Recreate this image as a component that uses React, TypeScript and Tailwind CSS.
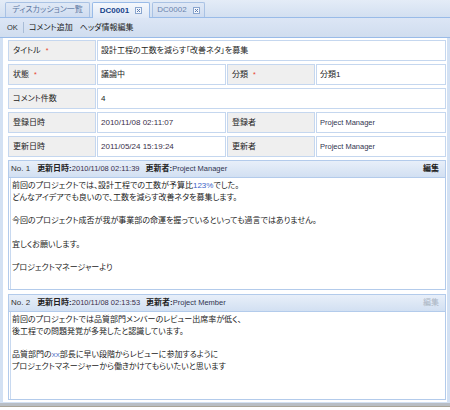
import { ReactNode } from "react";

interface Comment {
  no: number;
  updatedAt: string;
  updatedBy: string;
  body: ReactNode;
  editable: boolean;
  bodyHeight: string;
}

const comments: Comment[] = [
  {
    no: 1,
    updatedAt: "2010/11/08 02:11:39",
    updatedBy: "Project Manager",
    editable: true,
    bodyHeight: "h-[111px]",
    body: (
      <>
        前回のプロジェクトでは、設計工程での工数が予算比
        <span className="text-[#3b5fc8]">123%</span>でした。
        {"\n"}どんなアイデアでも良いので、工数を減らす改善ネタを募集します。
        {"\n\n"}今回のプロジェクト成否が我が事業部の命運を握っているといっても過言ではありません。
        {"\n\n"}宜しくお願いします。
        {"\n\n"}プロジェクトマネージャーより
      </>
    ),
  },
  {
    no: 2,
    updatedAt: "2010/11/08 02:13:53",
    updatedBy: "Project Member",
    editable: false,
    bodyHeight: "h-[87px]",
    body: (
      <>
        前回のプロジェクトでは品質部門メンバーのレビュー出席率が低く、
        {"\n"}後工程での問題発覚が多発したと認識しています。
        {"\n\n"}品質部門の<span className="text-[#5a78c8]">xx</span>
        部長に早い段階からレビューに参加するように
        {"\n"}プロジェクトマネージャーから働きかけてもらいたいと思います
      </>
    ),
  },
];

function Required() {
  return <span className="text-[#e8402a] ml-[5px] text-[7px]">*</span>;
}

function CloseIcon() {
  return (
    <svg width="7" height="7" viewBox="0 0 7 7" className="ml-[6px]">
      <rect x="0.5" y="0.5" width="6" height="6" fill="#f4f7fc" stroke="#8aa6cf" />
      <path d="M2 2 L5 5 M5 2 L2 5" stroke="#5b7bb0" strokeWidth="1" />
    </svg>
  );
}

function Label({ children }: { children: ReactNode }) {
  return (
    <div className="h-[21px] border border-[#c5d7ef] bg-[#efefef] flex items-center px-[4px] text-[#222]">
      {children}
    </div>
  );
}

function Value({ children, className = "" }: { children?: ReactNode; className?: string }) {
  return (
    <div className={`h-[21px] border border-[#c5d7ef] bg-white flex items-center px-[3px] ${className}`}>
      {children}
    </div>
  );
}

export default function App() {
  return (
    <div className="w-[450px] h-[410px] bg-white overflow-hidden text-[8px] leading-none text-[#222] font-['Liberation_Sans','Noto_Sans_CJK_JP',sans-serif] [font-feature-settings:'palt']">
      {/* tabs */}
      <div className="h-[18px] bg-gradient-to-b from-[#e4ecf7] to-[#d3e0f1] border-b border-[#99bbe8] flex items-end pl-[5px] gap-[2px]">
        <div className="h-[15px] w-[85px] flex items-center justify-center rounded-t-[2px] border border-b-0 border-[#a9c2e4] bg-gradient-to-b from-[#e0e9f6] to-[#cfdcf0] text-[#5d78a3]">
          ディスカッション一覧
        </div>
        <div className="h-[16px] -mb-px w-[58px] flex items-center justify-center rounded-t-[2px] border border-b-0 border-[#99bbe8] bg-gradient-to-b from-[#f5f8fc] to-[#dfe8f6] text-[#15428b] font-bold">
          DC0001
          <CloseIcon />
        </div>
        <div className="h-[15px] w-[53px] flex items-center justify-center rounded-t-[2px] border border-b-0 border-[#a9c2e4] bg-gradient-to-b from-[#e0e9f6] to-[#cfdcf0] text-[#6a84ad]">
          DC0002
          <CloseIcon />
        </div>
      </div>

      {/* toolbar */}
      <div className="h-[20px] bg-gradient-to-b from-[#dce6f5] to-[#d0ddef] border-b border-[#99bbe8] flex items-center pl-[7px] text-[#222]">
        <span className="text-[7.5px] text-[#333]">OK</span>
        <span className="w-px h-[11px] bg-[#a8bcd6] mx-[5px]" />
        <span>コメント追加</span>
        <span className="ml-[7px]">ヘッダ情報編集</span>
      </div>

      {/* content */}
      <div className="h-[365px] border-l-[3px] border-r-[3px] border-b border-[#d3e1f3] pl-[5px] pr-px pt-[2px] flex flex-col">
        <div className="grid grid-cols-[88px_129px_88px_1fr] gap-x-px gap-y-[3px]">
          <Label>
            タイトル
            <Required />
          </Label>
          <Value className="col-span-3">設計工程の工数を減らす「改善ネタ」を募集</Value>

          <Label>
            状態
            <Required />
          </Label>
          <Value>議論中</Value>
          <Label>
            分類
            <Required />
          </Label>
          <Value>分類1</Value>

          <Label>コメント件数</Label>
          <Value className="col-span-3">4</Value>

          <Label>登録日時</Label>
          <Value className="text-[#3a2f4a]">2010/11/08 02:11:07</Value>
          <Label>登録者</Label>
          <Value className="text-[#2f3450] text-[7.5px]">Project Manager</Value>

          <Label>更新日時</Label>
          <Value className="text-[#3a2f4a]">2011/05/24 15:19:24</Value>
          <Label>更新者</Label>
          <Value className="text-[#2f3450] text-[7.5px]">Project Manager</Value>
        </div>

        <div className="flex flex-col gap-[4px] mt-[3px]">
          {comments.map((c) => (
            <section key={c.no} className="border border-[#b3cbeb]">
              <div className="h-[17px] bg-gradient-to-b from-[#e8eff9] to-[#d2e0f2] border-b border-[#b3cbeb] flex items-center pl-[2px] pr-[6px]">
                <span className="text-[#333]">No. {c.no}</span>
                <span className="font-bold ml-[7px]">更新日時:</span>
                <span className="text-[#3a2f4a] text-[7.5px]">{c.updatedAt}</span>
                <span className="font-bold ml-[6px]">更新者:</span>
                <span className="text-[#2f3450] text-[7.5px]">{c.updatedBy}</span>
                <span
                  className={`ml-auto ${c.editable ? "text-[#222] font-bold" : "text-[#aab4c2]"}`}
                >
                  編集
                </span>
              </div>
              <div
                className={`${c.bodyHeight} bg-white border-l border-[#c8d9f0] ml-px pl-px pt-[2px] whitespace-pre-line leading-[11.7px]`}
              >
                {c.body}
              </div>
            </section>
          ))}
        </div>
      </div>
      <div className="h-[3px] bg-[#b9bec4]" />
      <div className="h-px bg-[#a9a497]" />
    </div>
  );
}
